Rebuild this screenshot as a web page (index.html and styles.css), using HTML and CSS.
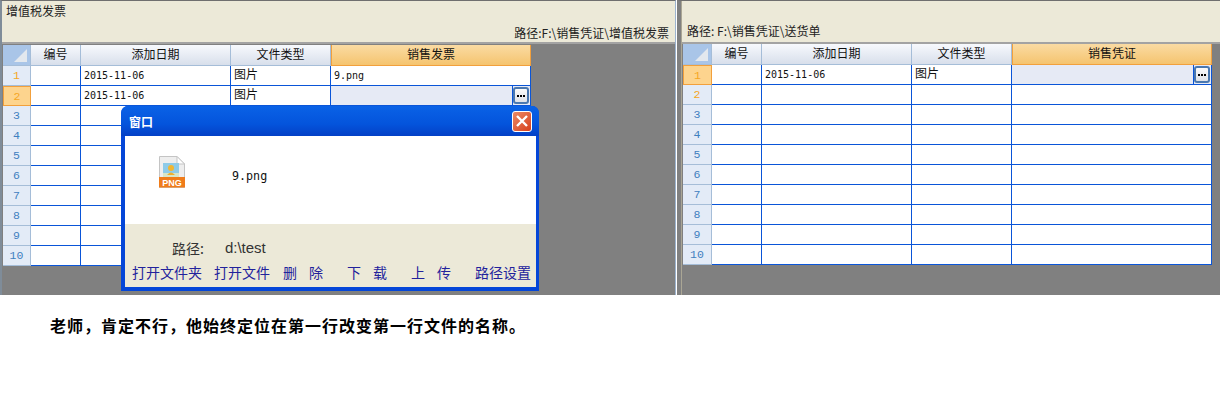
FILE: index.html
```html
<!DOCTYPE html>
<html lang="zh">
<head>
<meta charset="utf-8">
<title>销售凭证</title>
<link rel="stylesheet" href="styles.css">
</head>
<body>
<div class="panes">
  <section class="pane pane-left">
    <header class="head head-left">
      <div class="head-title">增值税发票</div>
      <div class="head-path">路径:F:\销售凭证\增值税发票</div>
    </header>
    <table class="grid">
      <colgroup><col class="c0"><col class="c1"><col class="c2"><col class="c3"><col class="c4"></colgroup>
      <thead><tr><th class="corner"><i></i></th><th>编号</th><th>添加日期</th><th>文件类型</th><th class="hot">销售发票</th></tr></thead>
      <tbody>
        <tr><th class="num on">1</th><td></td><td class="mono">2015-11-06</td><td class="cn">图片</td><td class="mono">9.png</td></tr>
        <tr><th class="num sel">2</th><td></td><td class="mono">2015-11-06</td><td class="cn">图片</td><td class="pick"><div class="pick-wrap"><button class="dots" type="button" aria-label="browse"><svg width="8" height="2" viewBox="0 0 8 2"><path d="M0 0h2v2H0zM3 0h2v2H3zM6 0h2v2H6z" fill="#000"/></svg></button></div></td></tr>
        <tr><th class="num">3</th><td></td><td></td><td></td><td></td></tr>
        <tr><th class="num">4</th><td></td><td></td><td></td><td></td></tr>
        <tr><th class="num">5</th><td></td><td></td><td></td><td></td></tr>
        <tr><th class="num">6</th><td></td><td></td><td></td><td></td></tr>
        <tr><th class="num">7</th><td></td><td></td><td></td><td></td></tr>
        <tr><th class="num">8</th><td></td><td></td><td></td><td></td></tr>
        <tr><th class="num">9</th><td></td><td></td><td></td><td></td></tr>
        <tr><th class="num">10</th><td></td><td></td><td></td><td></td></tr>
      </tbody>
    </table>
    <div class="dialog">
      <div class="dialog-title">
        <span>窗口</span>
        <span class="close"><svg width="14" height="14" viewBox="0 0 14 14"><path d="M2 2l10 10M12 2L2 12" stroke="#fff" stroke-width="2.4" fill="none"/></svg></span>
      </div>
      <div class="dialog-body">
        <svg class="file-icon" width="28" height="32" viewBox="0 0 28 32">
          <path d="M1.500.5H19L26.500 8V31.500H1.500Z" fill="#eeeeee" stroke="#c4c4c4"/>
          <path d="M19 .5V8H26.500Z" fill="#fff" stroke="#c4c4c4"/>
          <rect x="5" y="7" width="16" height="14" fill="#8ecbe8"/>
          <rect x="5" y="17" width="16" height="4" fill="#d8e6c8"/>
          <circle cx="13" cy="12" r="3" fill="#f2b632"/>
          <path d="M9 19q4-5 8 0Z" fill="#eeb02e"/>
          <rect x="1" y="21" width="26" height="10.500" fill="#f07c1a"/>
          <text x="14" y="29.700" class="png-label" text-anchor="middle">PNG</text>
        </svg>
        <span class="file-name">9.png</span>
      </div>
      <div class="dialog-foot">
        <div class="foot-path"><span>路径:</span><span class="foot-val">d:\test</span></div>
        <div class="foot-links">
          <a>打开文件夹</a><a>打开文件</a><a class="split nudge"><span>删</span><span>除</span></a><a class="split far"><span>下</span><span>载</span></a><a class="split far"><span>上</span><span>传</span></a><a class="far">路径设置</a>
        </div>
      </div>
    </div>
  </section>
  <section class="pane pane-right">
    <header class="head head-right">
      <div class="head-path">路径: F:\销售凭证\送货单</div>
    </header>
    <table class="grid">
      <colgroup><col class="c0"><col class="c1"><col class="c2"><col class="c3"><col class="c4"></colgroup>
      <thead><tr><th class="corner"><i></i></th><th>编号</th><th>添加日期</th><th>文件类型</th><th class="hot">销售凭证</th></tr></thead>
      <tbody>
        <tr><th class="num sel">1</th><td></td><td class="mono">2015-11-06</td><td class="cn">图片</td><td class="pick"><div class="pick-wrap"><button class="dots" type="button" aria-label="browse"><svg width="8" height="2" viewBox="0 0 8 2"><path d="M0 0h2v2H0zM3 0h2v2H3zM6 0h2v2H6z" fill="#000"/></svg></button></div></td></tr>
        <tr><th class="num on">2</th><td></td><td></td><td></td><td></td></tr>
        <tr><th class="num">3</th><td></td><td></td><td></td><td></td></tr>
        <tr><th class="num">4</th><td></td><td></td><td></td><td></td></tr>
        <tr><th class="num">5</th><td></td><td></td><td></td><td></td></tr>
        <tr><th class="num">6</th><td></td><td></td><td></td><td></td></tr>
        <tr><th class="num">7</th><td></td><td></td><td></td><td></td></tr>
        <tr><th class="num">8</th><td></td><td></td><td></td><td></td></tr>
        <tr><th class="num">9</th><td></td><td></td><td></td><td></td></tr>
        <tr><th class="num">10</th><td></td><td></td><td></td><td></td></tr>
      </tbody>
    </table>
  </section>
</div>
<p class="note">老师，肯定不行，他始终定位在第一行改变第一行文件的名称。</p>
</body>
</html>
```

FILE: styles.css
```css
* { box-sizing: border-box; }
html, body { margin: 0; padding: 0; background: #fff; overflow: hidden; }
body { font-family: "Noto Sans CJK SC", "Liberation Sans", sans-serif; font-size: 12px; color: #222; }

.panes { display: flex; height: 295px; }
.pane { background: #808080; height: 295px; }
.pane-left {
  position: relative;
  width: 676px;
  border-right: 1px solid #9db4cf;
  border-left: 2px solid #7f8c99;
  border-top: 1px solid #6f6f6f;
}
.pane-right {
  width: 543px;
  margin-left: 1px;
  border-left: 4px solid #808080;
  border-top: 1px solid #6f6f6f;
  background: linear-gradient(to right, #aaa695 1px, #808080 1px);
}

.head { background: #ece9d8; border-bottom: 2px solid #a3a3a3; }
.head-left { height: 43px; display: flex; flex-direction: column; justify-content: space-between; padding: 1px 6px 0 4px; }
.head-right { height: 43px; margin-left: 1px; display: flex; align-items: flex-end; padding: 0 0 2px 5px; }
.head-title { line-height: 18px; }
.head-path { line-height: 18px; }
.head-left .head-path { text-align: right; }

.grid {
  table-layout: fixed;
  border-collapse: separate;
  border-spacing: 0;
  width: 528px;
  margin-left: 1px;
  margin-top: 1px;
  background: #fff;
}
.pane-right .grid { width: 529px; margin-left: 2px; margin-top: 0; }
.c0 { width: 28px; }
.pane-right .c0 { width: 29px; }
.c1 { width: 50px; }
.c2 { width: 150px; }
.c3 { width: 100px; }
.c4 { width: 200px; }

.grid thead th {
  height: 21px;
  padding: 0 0 3px;
  font-weight: 400;
  font-size: 12px;
  line-height: 16px;
  color: #111;
  background: linear-gradient(#f7f9fd, #d8dfeb);
  border-right: 1px solid #a5bdd8;
  border-bottom: 1px solid #a5bdd8;
}
.grid thead .hot {
  background: linear-gradient(#fadba3, #f5c46f);
  border-right-color: #f2a03c;
  border-bottom-color: #f2a03c;
  border-left: 1px solid #f2a03c;
}
.grid thead .corner { background: #a9c5e8; position: relative; }
.corner i {
  position: absolute;
  right: 3px;
  bottom: 3px;
  width: 0;
  height: 0;
  border-style: solid;
  border-width: 0 0 13px 13px;
  border-color: transparent transparent #e3e8ee transparent;
}

.grid tbody td, .grid tbody th { height: 20px; padding: 0; }
.grid tbody td {
  border-right: 1px solid #0a55d8;
  border-bottom: 1px solid #0a55d8;
  background: #fff;
  color: #111;
  padding-left: 3px;
  white-space: nowrap;
}
.grid .num {
  background: #e3ebf7;
  border-right: 1px solid #a5bdd8;
  border-bottom: 1px solid #a5bdd8;
  color: #3f80c0;
  font-family: "Liberation Mono", monospace;
  font-weight: 400;
  font-size: 11.500px;
}
.grid .num.on { color: #f5a623; }
.grid .num.sel {
  background: #fdd48e;
  color: #f5a623;
  border: 1px solid #f2a03c;
}
.mono { font-family: "DejaVu Sans Mono", monospace; font-size: 10px; }
.grid tbody td.cn { font-size: 12px; line-height: 15px; vertical-align: top; }
.grid tbody td.pick { background: #e6eaf5; padding: 0 1px 0 0; }
.pick-wrap {
  width: 17px;
  height: 19px;
  margin-left: auto;
  padding-top: 1px;
  border-left: 1px solid #0a55d8;
}
.dots {
  display: flex;
  align-items: center;
  justify-content: center;
  width: 16px;
  height: 17px;
  padding: 0;
  border: 2px solid #4a78b0;
  border-radius: 3px;
  background: linear-gradient(#fbfbfb, #dfe2e8);
}

.dialog {
  position: absolute;
  left: 119px;
  top: 105px;
  width: 418px;
  height: 185px;
  background: #0a49d8;
  border: 4px solid #0446d8;
  border-top: 0;
  border-right-width: 3px;
  border-radius: 7px 7px 0 0;
  display: flex;
  flex-direction: column;
}
.dialog-title {
  height: 30px;
  flex: none;
  margin: 0 -3px 0 -4px;
  padding: 0 7px 0 8px;
  display: flex;
  align-items: center;
  justify-content: space-between;
  background: linear-gradient(#0a62e6 0%, #0454dc 60%, #0440c6 100%);
  border-radius: 7px 7px 0 0;
  color: #fff;
  font-weight: 700;
  font-size: 12px;
}
.close {
  width: 20px;
  height: 21px;
  display: flex;
  align-items: center;
  justify-content: center;
  border: 1px solid #fff;
  border-radius: 3px;
  background: linear-gradient(135deg, #ec8a66, #d6401c);
}
.dialog-body {
  height: 88px;
  flex: none;
  background: #fff;
  display: flex;
  align-items: flex-start;
  padding: 20px 0 0 33px;
}
.file-icon { flex: none; }
.png-label { font: 700 9px "Liberation Sans", sans-serif; fill: #fff; }
.file-name {
  margin: 12px 0 0 46px;
  font-family: "DejaVu Sans Mono", monospace;
  font-size: 11.700px;
  line-height: 16px;
  color: #111;
}
.dialog-foot { flex: 1; background: #ece9d8; padding: 14px 3px 0 7px; }
.foot-path { display: flex; font-size: 14px; line-height: 20px; padding-left: 40px; color: #333; }
.foot-val { margin-left: 21px; font-family: "Liberation Sans", sans-serif; font-size: 15px; }
.foot-links { display: flex; gap: 12px; margin-top: 4px; line-height: 20px; font-size: 14px; color: #22229c; white-space: nowrap; }
.split { display: flex; justify-content: space-between; width: 40px; }
.far { margin-left: 12px; }
.nudge { margin-left: 1px; }

.note {
  margin: 20px 0 0 50px;
  font-family: "Noto Sans CJK SC", sans-serif;
  font-weight: 700;
  font-size: 16px;
  letter-spacing: 1px;
  line-height: 20px;
  color: #000;
}
```
